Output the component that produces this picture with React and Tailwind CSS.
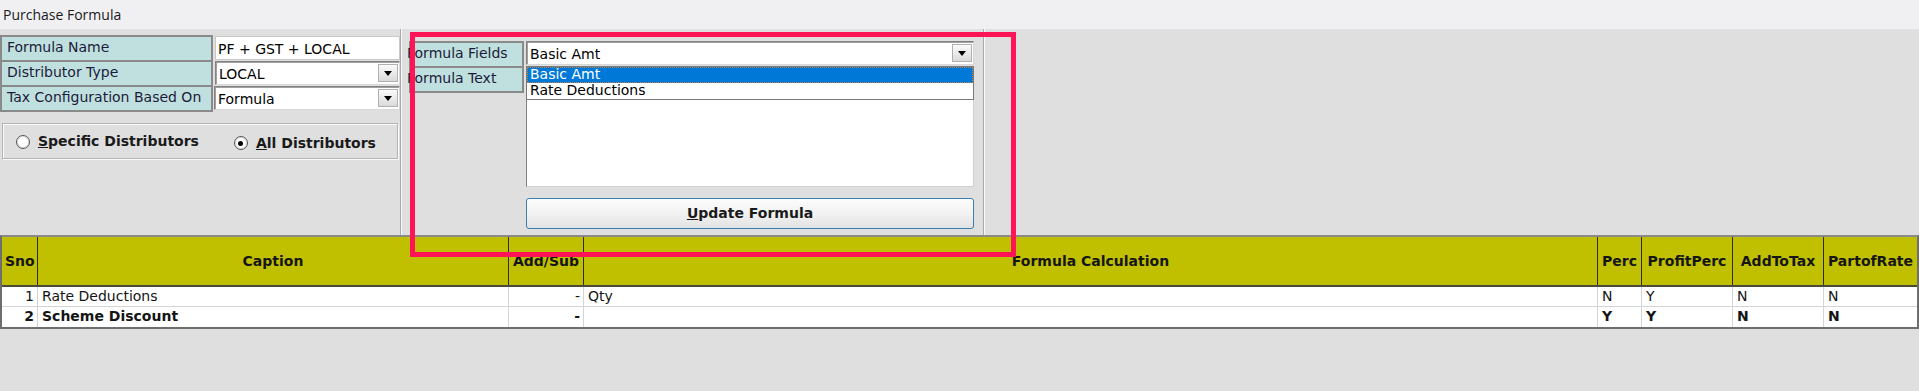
import React from "react";

const cols = "grid grid-cols-[36px_471px_75px_1014px_44px_91px_91px_93px]";

const heads = [
  { t: "Sno", left: true },
  { t: "Caption" },
  { t: "Add/Sub" },
  { t: "Formula Calculation" },
  { t: "Perc" },
  { t: "ProfitPerc" },
  { t: "AddToTax" },
  { t: "PartofRate" },
];

const rows = [
  { sno: "1", cap: "Rate Deductions", as: "-", f: "Qty", p: "N", pp: "Y", at: "N", pr: "N", bold: false },
  { sno: "2", cap: "Scheme Discount", as: "-", f: "", p: "Y", pp: "Y", at: "N", pr: "N", bold: true },
];

function Label({ children, last, w = "w-[213px]", pad = "pl-[5px] overflow-hidden" }) {
  return (
    <div
      className={
        w +
        " " +
        pad +
        " shrink-0 bg-[#c0e0df] border-x-2 border-t-2 border-[#8a8a8a] text-[14px] leading-[21px] text-[#1c1c3a] whitespace-nowrap " +
        (last ? "h-[27px] border-b-2" : "h-[25px]")
      }
    >
      {children}
    </div>
  );
}

function Arrow() {
  return (
    <div className="w-[20px] h-[18px] my-auto mr-[1px] shrink-0 flex items-center justify-center bg-linear-to-b from-[#fbfbfb] to-[#dadada] border border-[#b0b0b0]">
      <svg width="8" height="5" viewBox="0 0 8 5">
        <path d="M0 0h8L4 5z" fill="#000" />
      </svg>
    </div>
  );
}

function Combo({ value, h = "h-[24px]" }) {
  return (
    <div className={h + " flex-1 flex bg-white border border-[#828282] border-r-[#d8d8d8] border-b-[#d8d8d8] shadow-[inset_1px_1px_0_#a0a0a0]"}>
      <div className="flex-1 pl-[3px] text-[14px] leading-[22px] pt-[1px] text-black">{value}</div>
      <Arrow />
    </div>
  );
}

function Radio({ checked }) {
  return (
    <div className="w-[14px] h-[14px] rounded-full bg-white border border-[#555] shadow-[inset_0_0_0_1px_#ddd] flex items-center justify-center shrink-0">
      {checked && <div className="w-[5px] h-[5px] rounded-full bg-black" />}
    </div>
  );
}

export default function App() {
  return (
    <div className="relative w-[1919px] h-[391px] overflow-hidden bg-[#dfdfdf] font-['DejaVu_Sans',sans-serif] text-black">
      {/* title bar */}
      <div className="h-[29px] bg-[#f0f0f3] pl-[3px] text-[14px] leading-[29px] text-[#1a1a1a] font-['Open_Sans',sans-serif]">
        Purchase Formula
      </div>

      {/* top section */}
      <div className="flex h-[206px]">
        {/* left panel */}
        <div className="w-[401px] border-r border-[#a8a8a8] shadow-[1px_0_0_#fafafa] pt-[6px]">
          <div className="flex">
            <Label>Formula Name</Label>
            <div className="ml-[2px] mt-[1px] h-[24px] flex-1 bg-white border border-[#c8c8c8] pl-[2px] text-[14px] leading-[22px] pt-[1px]">
              PF + GST + LOCAL
            </div>
          </div>
          <div className="flex">
            <Label>Distributor Type</Label>
            <div className="ml-[2px] mt-[1px] flex-1 flex">
              <Combo value="LOCAL" />
            </div>
          </div>
          <div className="flex">
            <Label last>Tax Configuration Based On</Label>
            <div className="ml-[1px] mt-[1px] flex-1 flex h-[24px]">
              <Combo value="Formula" />
            </div>
          </div>
          <div className="mt-[11px] ml-[2px] mr-[2px] h-[36px] border border-[#b4b4b4] shadow-[inset_1px_1px_0_#fafafa,1px_1px_0_#fafafa] flex items-center pl-[13px]">
            <div className="flex items-center gap-[8px] mt-[1px]">
              <Radio />
              <span className="text-[14px] font-bold text-[#1a1a1a]">
                <span className="underline">S</span>pecific Distributors
              </span>
            </div>
            <div className="flex items-center gap-[8px] ml-[35px] mt-[4px]">
              <Radio checked />
              <span className="text-[14px] font-bold text-[#1a1a1a]">
                <span className="underline">A</span>ll Distributors
              </span>
            </div>
          </div>
        </div>

        {/* right panel */}
        <div className="w-[582px] border-r border-[#a8a8a8] shadow-[1px_0_0_#fafafa] ml-[1px] pt-[12px] pl-[7px] flex">
          <div className="w-[115px]">
            <Label w="w-[115px]" pad="pl-0">
              <span className="-ml-[4px]">Formula Fields</span>
            </Label>
            <Label w="w-[115px]" pad="pl-0" last>
              <span className="-ml-[4px]">Formula Text</span>
            </Label>
          </div>
          <div className="ml-[2px] w-[448px]">
            <div className="flex h-[24px]">
              <Combo value="Basic Amt" />
            </div>
            <div className="relative mt-[1px] h-[121px] bg-white border border-[#828282] border-r-[#d0d0d0] border-b-[#d0d0d0]">
              <div className="absolute -left-px -top-px right-[-1px] bg-white border border-[#7a7a7a] text-[14px]">
                <div className="h-[16px] leading-[15px] bg-[#0078d7] text-white pl-[3px] outline-1 outline-dotted outline-[#c08040] -outline-offset-1">
                  Basic Amt
                </div>
                <div className="h-[16px] leading-[15px] pl-[3px] text-black">Rate Deductions</div>
              </div>
            </div>
            <div className="mt-[11px] h-[31px] rounded-[3px] border border-[#3c7fb1] bg-linear-to-b from-[#fcfcfc] via-[#f2f2f2] to-[#e2e2e2] flex items-center justify-center text-[14px] font-bold text-[#1a1a1a]">
              <span>
                <span className="underline">U</span>pdate Formula
              </span>
            </div>
          </div>
        </div>
      </div>

      {/* table */}
      <div className="border-t-2 border-x-2 border-b-2 border-[#6e6e6e] border-t-[#8a8a8a] bg-white">
        <div className={cols + " h-[50px] bg-[#c0c000] border-b-2 border-[#4a4a3a]"}>
          {heads.map((h, i) => (
            <div
              key={h.t}
              className={
                "flex items-center text-[14px] font-bold text-[#151515] whitespace-nowrap overflow-hidden " +
                (h.left ? "pl-[3px] " : "justify-center ") +
                (i < heads.length - 1 ? "border-r border-[#2a2a2a]" : "")
              }
            >
              {h.t}
            </div>
          ))}
        </div>
        {rows.map((r, ri) => {
          const cells = [
            { v: r.sno, right: true },
            { v: r.cap },
            { v: r.as, right: true },
            { v: r.f },
            { v: r.p },
            { v: r.pp },
            { v: r.at },
            { v: r.pr },
          ];
          return (
            <div
              key={r.sno}
              className={cols + " h-[20px] " + (ri < rows.length - 1 ? "border-b-[1px] border-[#d4d4d4]" : "")}
            >
              {cells.map((c, i) => (
                <div
                  key={i}
                  className={
                    "text-[14px] leading-[19px] whitespace-nowrap overflow-hidden text-[#141414] " +
                    (r.bold ? "font-bold " : "") +
                    (c.right ? "text-right pr-[3px] " : "pl-[4px] ") +
                    (i < cells.length - 1 ? "border-r border-[#d4d4d4]" : "")
                  }
                >
                  {c.v}
                </div>
              ))}
            </div>
          );
        })}
      </div>

      {/* annotation */}
      <div className="absolute left-[410px] top-[32px] w-[606px] h-[225px] border-[5px] border-[#ff1458] pointer-events-none" />
    </div>
  );
}
